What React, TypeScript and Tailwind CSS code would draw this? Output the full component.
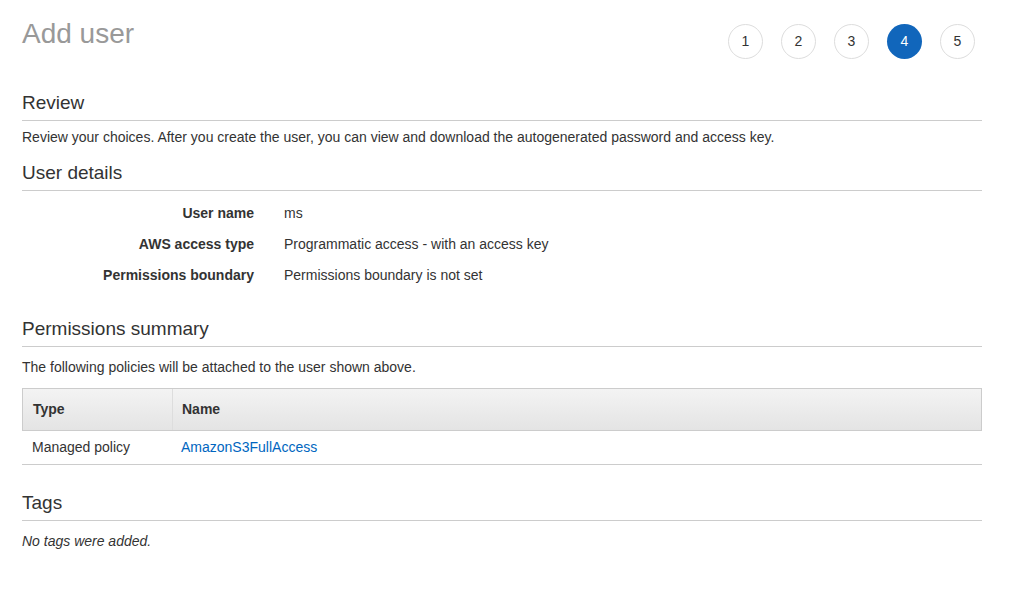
export default function App() {
  const H = ({ t }: { t: string }) => (
    <div className="text-[19px] leading-[24px] text-[#333] border-b border-[#ccc] pb-[5px]">{t}</div>
  );
  const rows = [
    ["User name", "ms"],
    ["AWS access type", "Programmatic access - with an access key"],
    ["Permissions boundary", "Permissions boundary is not set"],
  ];
  return (
    <div className="w-[1017px] h-[601px] bg-white text-[#333] text-[14px]" style={{ fontFamily: '"Liberation Sans", Arial, sans-serif' }}>
      <div className="w-[960px] ml-[22px]">
        <div className="flex justify-between pt-[18px]">
          <div className="text-[28px] leading-[32px] text-[#999]">Add user</div>
          <div className="flex gap-[18px] mt-[6px] mr-[7px]">
            {[1, 2, 3, 4, 5].map((n) => (
              <div key={n} className={`w-[35px] h-[35px] rounded-full flex items-center justify-center text-[14px] ${n === 4 ? "bg-[#1166bb] text-white" : "border border-[#ddd] text-[#333]"}`}>{n}</div>
            ))}
          </div>
        </div>
        <div className="mt-[32px]"><H t="Review" /></div>
        <div className="mt-[7px] leading-[18px]">Review your choices. After you create the user, you can view and download the autogenerated password and access key.</div>
        <div className="mt-[15px]"><H t="User details" /></div>
        <div className="mt-[13px] flex flex-col gap-[13px]">
          {rows.map(([l, v]) => (
            <div key={l} className="flex leading-[18px]">
              <div className="w-[232px] text-right font-bold">{l}</div>
              <div className="ml-[30px]">{v}</div>
            </div>
          ))}
        </div>
        <div className="mt-[33px]"><H t="Permissions summary" /></div>
        <div className="mt-[11px] leading-[18px]">The following policies will be attached to the user shown above.</div>
        <div className="mt-[12px] border-b border-[#ccc]">
          <div className="flex h-[43px] items-center border border-[#ccc] bg-gradient-to-b from-[#f3f3f3] to-[#e4e4e4] font-bold">
            <div className="w-[150px] h-full flex items-center pl-[10px] border-r border-[#ddd]">Type</div>
            <div className="pl-[9px]">Name</div>
          </div>
          <div className="flex h-[33px] items-center">
            <div className="w-[150px] pl-[10px]">Managed policy</div>
            <div className="pl-[9px] text-[#0066c0]">AmazonS3FullAccess</div>
          </div>
        </div>
        <div className="mt-[26px]"><H t="Tags" /></div>
        <div className="mt-[11px] italic leading-[18px]">No tags were added.</div>
      </div>
    </div>
  );
}
